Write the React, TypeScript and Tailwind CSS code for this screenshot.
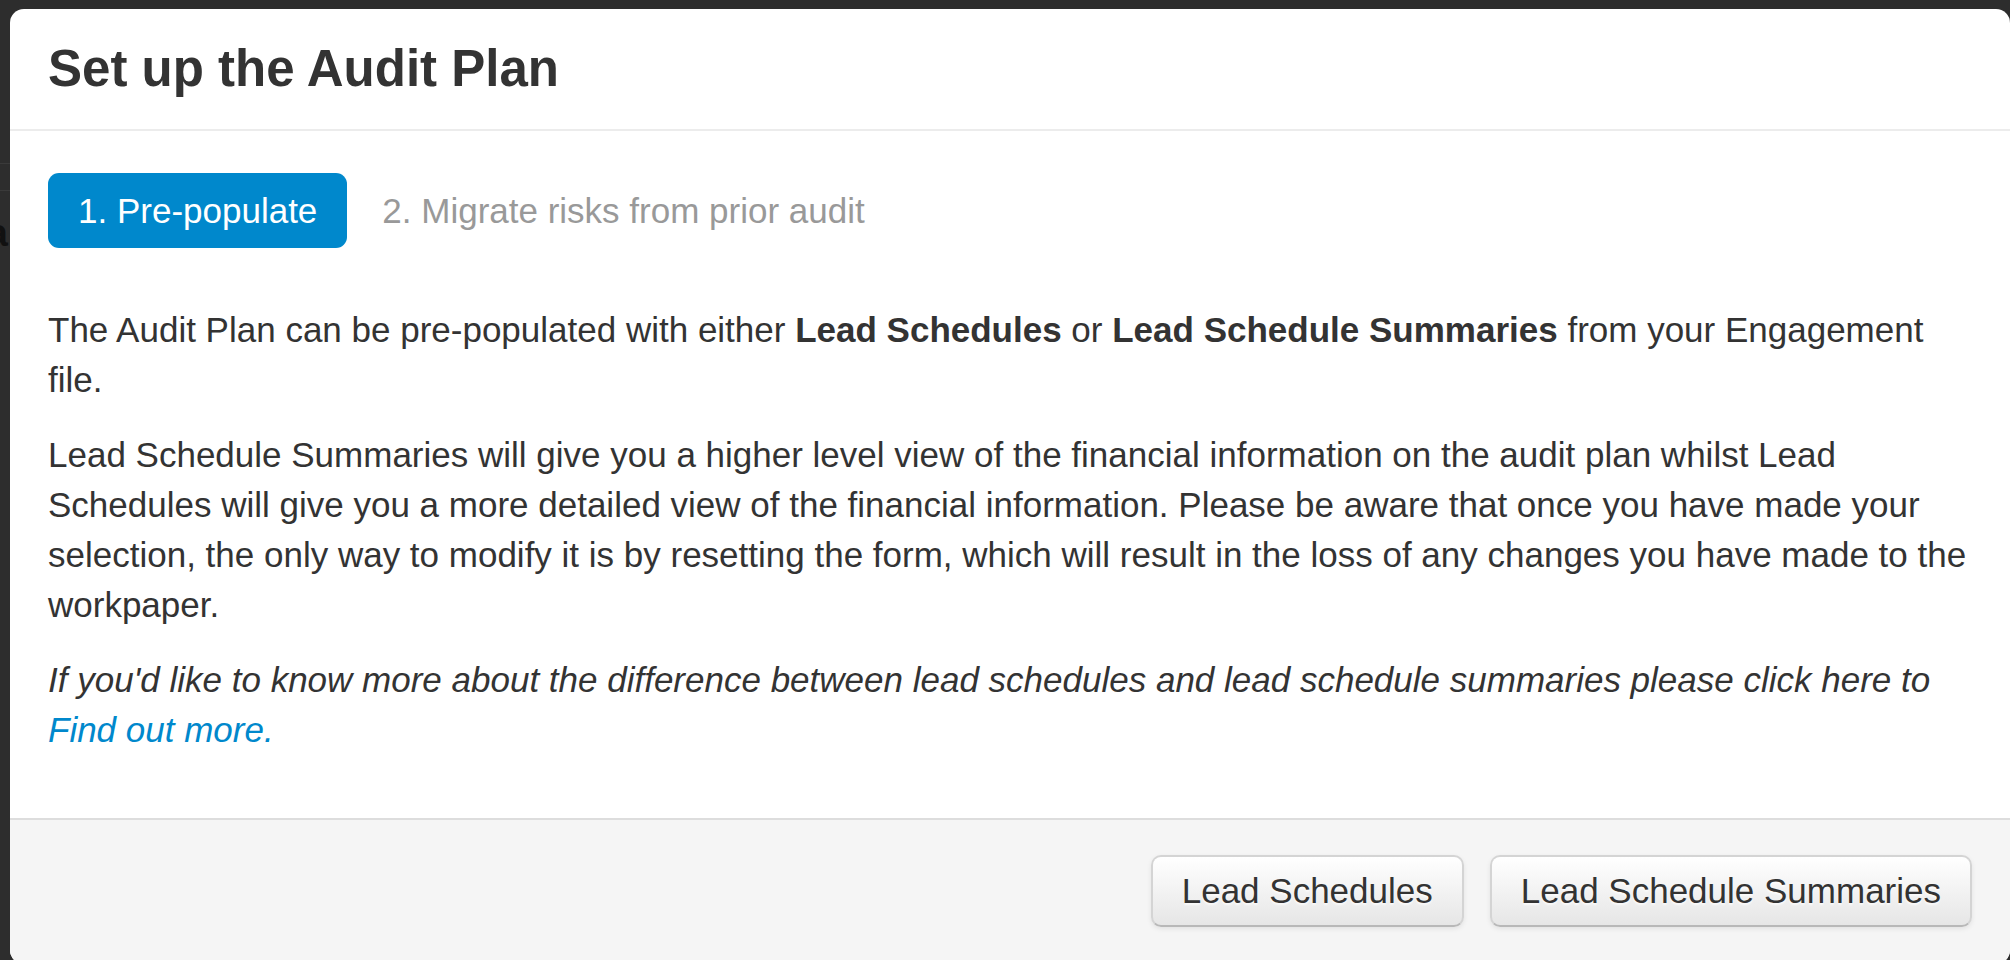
import React from 'react';

const font = { fontFamily: '"Liberation Sans", Arial, Helvetica, sans-serif' };

function BackdropStrip() {
  // the darkened page behind the modal, only a sliver is visible on the left
  return (
    <div className="w-[10px] h-full shrink-0 overflow-hidden flex flex-col">
      <div className="h-[163px] shrink-0" />
      <div className="h-px bg-[#3a3a3a] shrink-0" />
      <div className="h-[26px] shrink-0" />
      <div className="h-px bg-[#3a3a3a] shrink-0" />
      <div className="h-[22px] shrink-0" />
      <div className="flex justify-end shrink-0">
        <span className="text-[38px] leading-[40px] font-bold text-[#111] mr-[2px]">a</span>
      </div>
    </div>
  );
}

function FooterButton({ label }: { label: string }) {
  return (
    <button className="px-[29px] py-[9px] text-[35px] leading-[50px] text-[#333] rounded-[10px] border-2 border-[#d4d4d4] border-b-[#b8b8b8] bg-gradient-to-b from-white to-[#e6e6e6] shadow-[inset_0_2px_0_rgba(255,255,255,0.3),0_2px_5px_rgba(0,0,0,0.08)] [text-shadow:0_2px_2px_rgba(255,255,255,0.75)]">
      {label}
    </button>
  );
}

export default function App() {
  return (
    <div className="w-[2010px] h-[960px] bg-[#2d2d2d] overflow-hidden flex items-start" style={font}>
      <BackdropStrip />
      <div className="flex-1 mt-[9px] h-[955px] bg-white rounded-[14px] overflow-hidden flex flex-col">
        <div className="px-[38px] pt-[24px] pb-[24px] border-b-2 border-[#ececec]">
          <h3 className="text-[51px] leading-[72px] font-bold text-[#333]">Set up the Audit Plan</h3>
        </div>

        <div className="px-[38px] pt-[37px] pb-[38px]">
          <ul className="flex items-center gap-[5px] mb-[52px]">
            <li className="my-[5px]">
              <a className="block px-[30px] py-[20px] text-[35px] leading-[35px] text-white bg-[#0088cc] rounded-[11px]">
                1. Pre-populate
              </a>
            </li>
            <li className="my-[5px]">
              <a className="block px-[30px] py-[20px] text-[35px] leading-[35px] text-[#999]">
                2. Migrate risks from prior audit
              </a>
            </li>
          </ul>

          <div className="text-[35px] leading-[50px] text-[#333]">
            <p className="mb-[25px]">
              The Audit Plan can be pre-populated with either <b>Lead Schedules</b> or{' '}
              <b>Lead Schedule Summaries</b> from your Engagement file.
            </p>
            <p className="mb-[25px]">
              Lead Schedule Summaries will give you a higher level view of the financial information on the audit
              plan whilst Lead Schedules will give you a more detailed view of the financial information. Please be
              aware that once you have made your selection, the only way to modify it is by resetting the form, which
              will result in the loss of any changes you have made to the workpaper.
            </p>
            <p className="mb-[25px] italic">
              If you'd like to know more about the difference between lead schedules and lead schedule summaries
              please click here to <a className="text-[#0088cc]">Find out more.</a>
            </p>
          </div>
        </div>

        <div className="flex-1 bg-[#f5f5f5] border-t-2 border-[#dddddd] px-[38px] pt-[35px] flex justify-end items-start gap-[26px]">
          <FooterButton label="Lead Schedules" />
          <FooterButton label="Lead Schedule Summaries" />
        </div>
      </div>
    </div>
  );
}
